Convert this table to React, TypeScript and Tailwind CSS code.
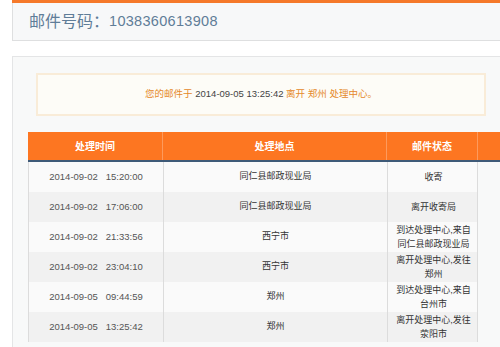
import React from 'react';

const rows = [
  { time: '2014-09-02   15:20:00', place: '同仁县邮政现业局', status: ['收寄'] },
  { time: '2014-09-02   17:06:00', place: '同仁县邮政现业局', status: ['离开收寄局'] },
  { time: '2014-09-02   21:33:56', place: '西宁市', status: ['到达处理中心,来自', '同仁县邮政现业局'] },
  { time: '2014-09-02   23:04:10', place: '西宁市', status: ['离开处理中心,发往', '郑州'] },
  { time: '2014-09-05   09:44:59', place: '郑州', status: ['到达处理中心,来自', '台州市'] },
  { time: '2014-09-05   13:25:42', place: '郑州', status: ['离开处理中心,发往', '荥阳市'] },
];

const font = "font-['Liberation_Sans','Noto_Sans_CJK_SC',sans-serif]";

export default function App() {
  return (
    <div className={`w-[500px] h-[347px] overflow-hidden bg-white pl-3 ${font}`}>
      {/* mail number header */}
      <div className="border-t-[3px] border-[#f5792a]">
        <div className="h-[38px] flex items-center pl-[16px] bg-[#f7f8f9] border-l border-b border-[#dedfe0] text-[#5f7d98]">
          <span className="text-[16px]">邮件号码：</span>
          <span className="text-[14.5px] tracking-[0.3px]">1038360613908</span>
        </div>
      </div>

      {/* tracking panel */}
      <div className="mt-[15px] h-[400px] bg-[#f8f9f9] border-l border-t border-[#e4e5e6] pt-[16px]">
        <div className="ml-[23px] w-[450px] h-[43px] flex items-center justify-center border-2 border-[#f9ecd8] bg-[#fdfcf7] text-[9.5px] text-[#e5892a]">
          <span>
            您的邮件于 <span className="text-[#444]">2014-09-05 13:25:42</span> 离开 郑州 处理中心。
          </span>
        </div>

        <div className="ml-[15px] mt-[16px]">
          <div className="grid grid-cols-[135px_224px_91px_17px] h-[30px] bg-[#fd7621] border-b-2 border-[#3e5a78] text-white text-[10px] font-bold">
            <div className="flex items-center justify-center border-r border-[#fd9a5c]">处理时间</div>
            <div className="flex items-center justify-center border-r border-[#fd9a5c]">处理地点</div>
            <div className="flex items-center justify-center border-r border-[#fd9a5c]">邮件状态</div>
            <div />
          </div>
          {rows.map((r, i) => (
            <div
              key={i}
              className={`grid grid-cols-[135px_224px_91px] w-[450px] h-[30px] border-l border-r border-[#dcdcdc] text-[9px] text-[#333] ${
                i % 2 === 0 ? 'bg-[#fafafa]' : 'bg-[#f1f1f1]'
              }`}
            >
              <div className="flex items-center justify-center border-r border-[#dcdcdc] whitespace-pre text-[#555] text-[9.5px]">
                {r.time}
              </div>
              <div className="flex items-center justify-center border-r border-[#dcdcdc]">{r.place}</div>
              <div className="flex flex-col items-center justify-center leading-[14px]">
                {r.status.map((s) => (
                  <span key={s}>{s}</span>
                ))}
              </div>
            </div>
          ))}
        </div>
      </div>
    </div>
  );
}
